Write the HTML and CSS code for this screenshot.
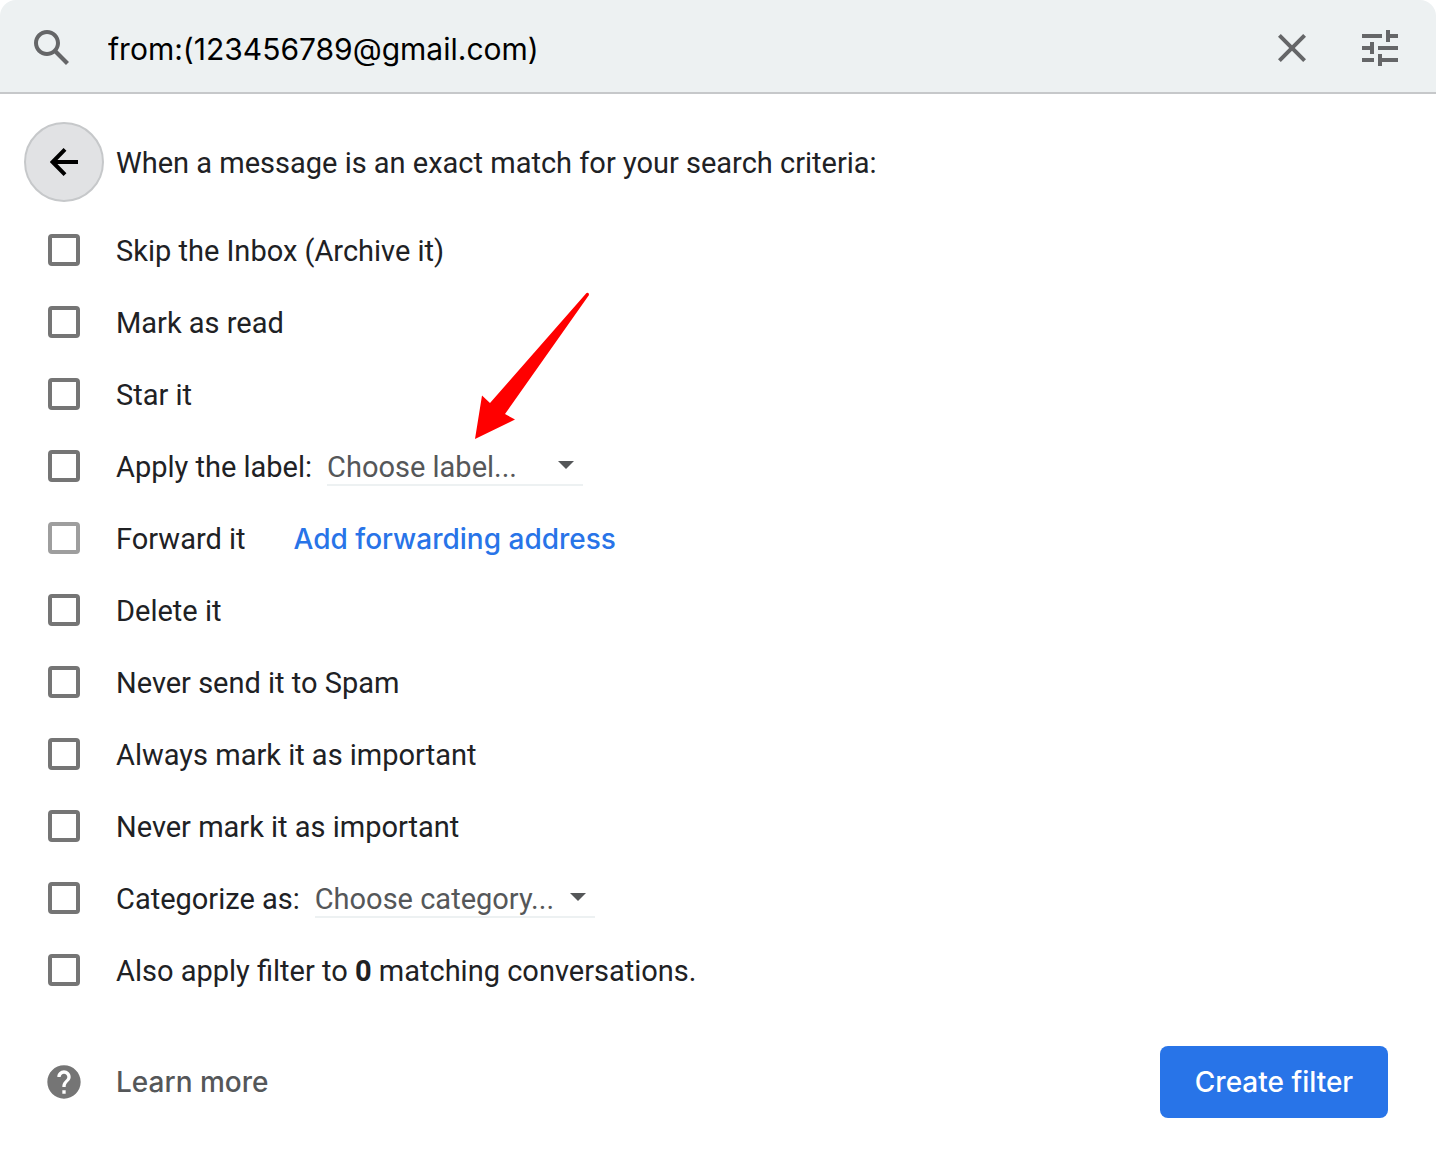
FILE: index.html
```
<!DOCTYPE html>
<html lang="en">
<head>
  <meta charset="UTF-8">
  <meta name="viewport" content="width=device-width, initial-scale=1.0">
  <title>Create filter</title>
  <link rel="stylesheet" href="styles.css">
</head>
<body>
  <!-- Search bar -->
  <header class="search-bar">
    <button type="button" class="icon-btn" aria-label="Search">
      <svg viewBox="0 0 24 24"><path d="M20.49 19l-5.73-5.73C15.53 12.2 16 10.91 16 9.5 16 5.91 13.09 3 9.5 3S3 5.91 3 9.5 5.91 16 9.5 16c1.41 0 2.7-.47 3.77-1.24L19 20.49 20.49 19zM5 9.5C5 7.01 7.01 5 9.5 5S14 7.01 14 9.5 11.99 14 9.5 14 5 11.99 5 9.5z"/></svg>
    </button>
    <input type="text" class="search-input" value="from:(123456789@gmail.com)" aria-label="Search mail">
    <button type="button" class="icon-btn" aria-label="Clear search">
      <svg viewBox="0 0 24 24"><path d="M19 6.41L17.59 5 12 10.59 6.41 5 5 6.41 10.59 12 5 17.59 6.41 19 12 13.41 17.59 19 19 17.59 13.41 12z"/></svg>
    </button>
    <button type="button" class="icon-btn" aria-label="Search options">
      <svg viewBox="0 0 24 24"><path d="M3 17v2h6v-2H3zM3 5v2h10V5H3zm10 16v-2h8v-2h-8v-2h-2v6h2zM7 9v2H3v2h4v2h2V9H7zm14 4v-2H11v2h10zm-6-4h2V7h4V5h-4V3h-2v6z"/></svg>
    </button>
  </header>

  <!-- Filter actions -->
  <form class="filter">
    <div class="filter-title">
      <button type="button" class="back-btn" aria-label="Back">
        <svg viewBox="0 0 28 28"><path d="M28 14H3M15 1.4L2.6 14 15 26.6"/></svg>
      </button>
      <h1>When a message is an exact match for your search criteria:</h1>
    </div>

    <div class="row">
      <input type="checkbox" id="archive">
      <label for="archive">Skip the Inbox (Archive it)</label>
    </div>
    <div class="row">
      <input type="checkbox" id="read">
      <label for="read">Mark as read</label>
    </div>
    <div class="row">
      <input type="checkbox" id="star">
      <label for="star">Star it</label>
    </div>
    <div class="row">
      <input type="checkbox" id="apply">
      <label for="apply">Apply the label:</label>
      <div class="dropdown dropdown-label">
        <select aria-label="Label">
          <option>Choose label...</option>
        </select>
        <svg class="pointer" viewBox="0 0 116 148"><path d="M112.5 1Q115 0 115 3L31 122 41 127.500 1 147 8 103.500 16 111z"/></svg>
      </div>
    </div>
    <div class="row">
      <input type="checkbox" id="forward" disabled>
      <label for="forward">Forward it</label>
      <a href="#" class="forward-link">Add forwarding address</a>
    </div>
    <div class="row">
      <input type="checkbox" id="delete">
      <label for="delete">Delete it</label>
    </div>
    <div class="row">
      <input type="checkbox" id="spam">
      <label for="spam">Never send it to Spam</label>
    </div>
    <div class="row">
      <input type="checkbox" id="important">
      <label for="important">Always mark it as important</label>
    </div>
    <div class="row">
      <input type="checkbox" id="unimportant">
      <label for="unimportant">Never mark it as important</label>
    </div>
    <div class="row">
      <input type="checkbox" id="categorize">
      <label for="categorize">Categorize as:</label>
      <div class="dropdown dropdown-category">
        <select aria-label="Category">
          <option>Choose category...</option>
        </select>
      </div>
    </div>
    <div class="row">
      <input type="checkbox" id="also">
      <label for="also">Also apply filter to <b>0</b> matching conversations.</label>
    </div>

    <div class="filter-footer">
      <a href="#" class="learn-more">
        <svg viewBox="0 0 24 24"><path d="M12 2C6.48 2 2 6.48 2 12s4.48 10 10 10 10-4.48 10-10S17.52 2 12 2zm1 17h-2v-2h2v2zm2.07-7.75l-.9.92C13.45 12.9 13 13.5 13 15h-2v-.5c0-1.1.45-2.1 1.17-2.83l1.24-1.26c.37-.36.59-.86.59-1.41 0-1.1-.9-2-2-2s-2 .9-2 2H8c0-2.21 1.79-4 4-4s4 1.79 4 4c0 .88-.36 1.68-.93 2.25z"/></svg>
        Learn more
      </a>
      <button type="submit" class="create-btn">Create filter</button>
    </div>
  </form>
</body>
</html>
```
FILE: styles.css
```
:root {
  --text-color: #202124;
  --muted-color: #555759;
  --icon-color: #656668;
  --accent-color: #2874e8;
  --bar-bg: #edf1f2;
  --font-family: Roboto, "Liberation Sans", sans-serif;
  --brand-font: Inter, Roboto, sans-serif;
}
* {
  box-sizing: border-box;
  margin: 0;
  padding: 0;
}
body {
  font-family: var(--font-family);
  font-size: 29px;
  line-height: 40px;
  color: var(--text-color);
  background: #fff;
}
button, input, select {
  font: inherit;
  color: inherit;
  border: none;
  background: none;
}
button {
  cursor: pointer;
}
a {
  text-decoration: none;
}
/* Search bar */
.search-bar {
  display: flex;
  align-items: center;
  padding: 24px 32px 20px 28px;
  background: var(--bar-bg);
  border-bottom: 2px solid #c6c8ca;
  border-radius: 16px 16px 0 0;
}
.icon-btn {
  width: 48px;
  height: 48px;
  margin-left: 40px;
}
.icon-btn:first-child {
  margin-left: 0;
}
.icon-btn svg {
  display: block;
  fill: var(--icon-color);
}
.search-input {
  flex: 1;
  min-width: 0;
  margin-left: 32px;
  padding-top: 2px;
  font-family: var(--brand-font);
  font-size: 30px;
  color: #000;
  outline: none;
}
/* Filter form */
.filter {
  padding: 28px 48px 46px;
}
.filter-title {
  display: flex;
  align-items: center;
  gap: 12px;
  margin: 0 0 12px -24px;
}
.filter-title h1 {
  padding-top: 2px;
  font-size: inherit;
  font-weight: 400;
}
.back-btn {
  display: flex;
  align-items: center;
  justify-content: center;
  width: 80px;
  height: 80px;
  background: #e1e2e4;
  border: 2px solid #c6c8ca;
  border-radius: 50%;
}
.back-btn svg {
  width: 28px;
  height: 28px;
  fill: none;
  stroke: #000;
  stroke-width: 4;
}
.row {
  display: flex;
  align-items: center;
  height: 72px;
}
.row label,
.row a {
  padding-top: 2px;
}
.row input {
  appearance: none;
  width: 32px;
  height: 32px;
  margin-right: 36px;
  border: 4px solid #757575;
  border-radius: 4px;
}
.row input:disabled {
  border-color: #9e9e9e;
}
/* Dropdowns */
.dropdown {
  position: relative;
  margin-left: 15px;
}
.dropdown select {
  appearance: none;
  display: block;
  width: 100%;
  height: 40px;
  padding-top: 1px;
  color: var(--muted-color);
  border-bottom: 2px solid var(--bar-bg);
}
.dropdown::after {
  content: "";
  position: absolute;
  top: 15px;
  right: 9px;
  border: 8px solid transparent;
  border-top-color: var(--muted-color);
  border-bottom: none;
  pointer-events: none;
}
.dropdown-label {
  width: 256px;
}
.dropdown-category {
  width: 280px;
}
/* Red arrow over the label dropdown */
.pointer {
  position: absolute;
  left: 147px;
  bottom: 46px;
  width: 116px;
  height: 148px;
  fill: #f00;
  pointer-events: none;
}
.forward-link {
  margin-left: 48px;
  font-family: var(--brand-font);
  font-size: 28px;
  font-weight: 500;
  color: var(--accent-color);
}
/* Footer */
.filter-footer {
  display: flex;
  align-items: center;
  justify-content: space-between;
  margin-top: 40px;
}
.learn-more {
  display: flex;
  align-items: center;
  gap: 32px;
  margin-left: -4px;
  font-family: var(--brand-font);
  font-size: 28px;
  font-weight: 500;
  color: var(--muted-color);
}
.learn-more svg {
  width: 40px;
  height: 40px;
  fill: #757575;
}
.create-btn {
  min-width: 228px;
  height: 72px;
  padding: 0 32px;
  font-family: var(--brand-font);
  font-size: 28px;
  font-weight: 500;
  color: #fff;
  background: var(--accent-color);
  border-radius: 8px;
}
```
